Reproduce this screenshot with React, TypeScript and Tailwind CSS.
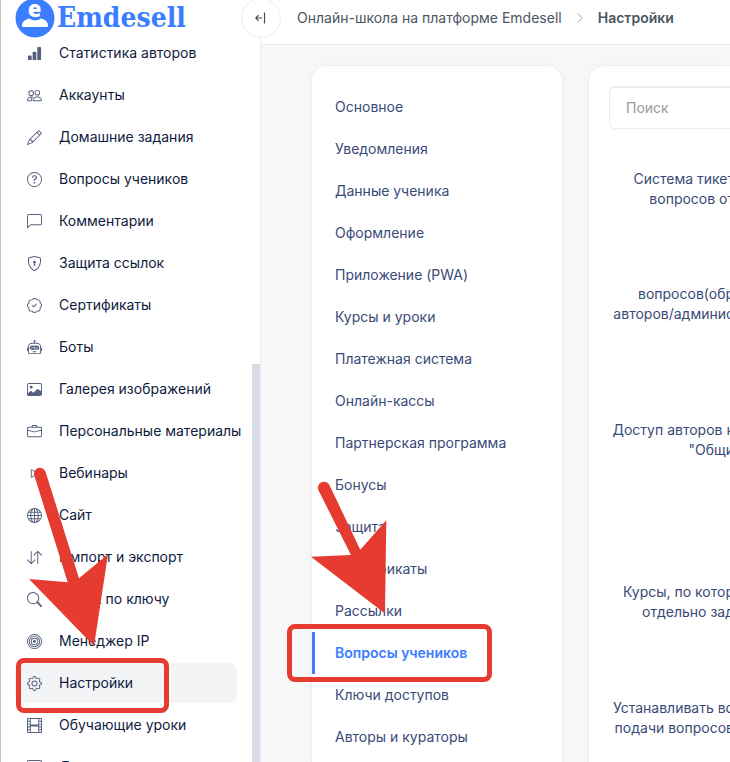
import { useState } from 'react';
import type { IconType } from 'react-icons';
import {
  BsArrowDownUp,
  BsBarChartFill,
  BsBriefcase,
  BsBullseye,
  BsChatLeft,
  BsChevronRight,
  BsCodeSquare,
  BsFilm,
  BsGear,
  BsGlobe,
  BsImage,
  BsPatchCheck,
  BsPencil,
  BsPeople,
  BsPlay,
  BsQuestionCircle,
  BsRobot,
  BsSearch,
  BsShieldLock,
} from 'react-icons/bs';

interface NavItem {
  label: string;
  icon: IconType;
}

const navItems: NavItem[] = [
  { label: 'Статистика авторов', icon: BsBarChartFill },
  { label: 'Аккаунты', icon: BsPeople },
  { label: 'Домашние задания', icon: BsPencil },
  { label: 'Вопросы учеников', icon: BsQuestionCircle },
  { label: 'Комментарии', icon: BsChatLeft },
  { label: 'Защита ссылок', icon: BsShieldLock },
  { label: 'Сертификаты', icon: BsPatchCheck },
  { label: 'Боты', icon: BsRobot },
  { label: 'Галерея изображений', icon: BsImage },
  { label: 'Персональные материалы', icon: BsBriefcase },
  { label: 'Вебинары', icon: BsPlay },
  { label: 'Сайт', icon: BsGlobe },
  { label: 'Импорт и экспорт', icon: BsArrowDownUp },
  { label: 'Поиск по ключу', icon: BsSearch },
  { label: 'Менеджер IP', icon: BsBullseye },
  { label: 'Настройки', icon: BsGear },
  { label: 'Обучающие уроки', icon: BsFilm },
  { label: 'Документы', icon: BsCodeSquare },
];

const sections = [
  'Основное',
  'Уведомления',
  'Данные ученика',
  'Оформление',
  'Приложение (PWA)',
  'Курсы и уроки',
  'Платежная система',
  'Онлайн-кассы',
  'Партнерская программа',
  'Бонусы',
  'Защита',
  'Сертификаты',
  'Рассылки',
  'Вопросы учеников',
  'Ключи доступов',
  'Авторы и кураторы',
];

const options = [
  { lines: ['Система тикет', 'вопросов от'], space: 'pb-[75px]' },
  { lines: ['вопросов(обр', 'авторов/админис'], space: 'pb-24' },
  { lines: ['Доступ авторов к', '"Общи'], space: 'pb-[122px]' },
  { lines: ['Курсы, по котор', 'отдельно зад'], space: 'pb-[76px]' },
  { lines: ['Устанавливать во', 'подачи вопросов'], space: 'pb-[76px]' },
];

function Logo() {
  return (
    <a href="#" className="flex items-center gap-0.5 text-[#3b7dff]">
      <svg className="h-10 w-10 shrink-0" viewBox="0 0 40 40" aria-hidden="true">
        <circle cx="20" cy="20" r="19.5" fill="currentColor" />
        <path
          d="M7 27.500C7 23 11.500 21.500 14.500 20.600C18 23.200 22.500 23.200 25.800 20.600C29 21.500 33 23 33 27.500C33 28.700 32.400 29 31.500 29H8.500C7.600 29 7 28.700 7 27.500Z"
          fill="#fff"
        />
        <text
          x="19.500"
          y="19"
          textAnchor="middle"
          fontFamily="Open Sans, sans-serif"
          fontWeight="800"
          fontSize="22"
          fill="#fff"
        >
          e
        </text>
      </svg>
      <span className="font-['DejaVu_Serif_Condensed','DejaVu_Serif',serif] text-[28px] leading-8 font-bold">
        Emdesell
      </span>
    </a>
  );
}

function Sidebar() {
  const [active, setActive] = useState('Настройки');

  return (
    <aside className="flex w-[261px] shrink-0 border-x border-l-[#c4c4c4] border-r-[#ebebf3] bg-white">
      <div className="min-w-0 flex-1">
        <div className="flex h-8 items-center pt-1 pl-[14px]">
          <Logo />
        </div>
        <nav className="flex flex-col gap-0.5 pt-px pr-[15px] pl-[14px]">
          {navItems.map(({ label, icon: Icon }) => (
            <a
              key={label}
              href="#"
              onClick={() => setActive(label)}
              className={`flex h-10 items-center gap-[17px] rounded-lg pl-3 whitespace-nowrap ${
                active === label ? 'bg-[#f3f4f6]' : ''
              }`}
            >
              <Icon className="h-[15px] w-[15px] shrink-0 text-[#55607e]" />
              <span className="text-sm text-[#0f1b3d]">{label}</span>
            </a>
          ))}
        </nav>
      </div>
      <div className="w-2 shrink-0 pt-[364px]">
        <div className="h-full bg-[#d6dce3]" />
      </div>
    </aside>
  );
}

function Header() {
  return (
    <header className="relative flex h-[45px] shrink-0 items-center border-b border-[#ebebf3] bg-white pb-2 pl-9 whitespace-nowrap text-[#4b5563]">
      <button
        type="button"
        aria-label="Свернуть меню"
        className="absolute -top-0.5 -left-5 flex h-10 w-10 items-center justify-center rounded-full border border-[#ebebf3] bg-white"
      >
        <svg className="h-3 w-3" viewBox="0 0 12 12" fill="none" stroke="#4a4a4a" strokeWidth="1.200" aria-hidden="true">
          <path d="M7 6H1M3.500 3.200L0.800 6L3.500 8.800M9.500 0.500V11.500" />
        </svg>
      </button>
      <nav className="flex items-center text-sm">
        <a href="#">Онлайн-школа на платформе Emdesell</a>
        <BsChevronRight className="mx-3 h-3 w-3 text-[#a5a8b0]" />
        <span className="font-semibold">Настройки</span>
      </nav>
    </header>
  );
}

function SectionMenu() {
  const [current, setCurrent] = useState('Вопросы учеников');

  return (
    <nav className="w-[252px] shrink-0 rounded-t-2xl border border-b-0 border-[#ededf4] bg-white pt-5 shadow-[0_0_20px_rgba(0,0,0,0.03)]">
      {sections.map((section) => (
        <a
          key={section}
          href="#"
          onClick={() => setCurrent(section)}
          className={`flex h-[42px] items-center border-l-3 pl-5 text-sm ${
            current === section
              ? 'border-[#3b7dff] font-semibold text-[#3b7dff]'
              : 'border-transparent text-[#3a4a78]'
          }`}
        >
          {section}
        </a>
      ))}
    </nav>
  );
}

function OptionsPanel() {
  return (
    <section className="min-w-0 flex-1 overflow-hidden rounded-tl-2xl border border-r-0 border-b-0 border-[#ededf4] bg-white pt-5 pl-5 shadow-[0_0_20px_rgba(0,0,0,0.03)]">
      <input
        type="text"
        aria-label="Поиск"
        placeholder="Поиск"
        className="block h-[43px] w-full rounded-l-md border border-t-2 border-r-0 border-[#ebebf3] px-4 pb-0.5 text-sm text-[#3a4a78] outline-none placeholder:text-[#9a9a9a]"
      />
      <div className="-mr-1 pt-10 text-right text-sm whitespace-nowrap text-[#3a4a78]">
        {options.map(({ lines, space }) => (
          <p key={lines[0]} className={space}>
            {lines[0]}
            <br />
            {lines[1]}
          </p>
        ))}
      </div>
    </section>
  );
}

// Red arrows and frames that point the reader to the right menu items
function Annotations() {
  return (
    <div className="pointer-events-none absolute inset-0 overflow-hidden">
      <svg className="absolute top-0 left-0 h-[762px] w-[730px]" viewBox="0 0 730 762" fill="#e53b30" aria-hidden="true">
        <path d="M34.300 475.500A5.800 5.800 0 0 1 45.600 472L79 578.300L108 554.300L94 646L29 579L67.700 582.300Z" />
        <path d="M318.600 490.500A6 6 0 0 1 329.400 485L360.300 549.700L386.300 520.300L385 613.500L311 556.700L351 555Z" />
      </svg>
      <div className="absolute top-[658px] left-4 h-[55px] w-[153px] rounded-lg border-5 border-[#e53b30]" />
      <div className="absolute top-[624px] left-[287px] h-[58px] w-[205px] rounded-lg border-5 border-[#e53b30]" />
    </div>
  );
}

export default function App() {
  return (
    <div className="relative flex h-screen overflow-hidden bg-[#f8f8f8] font-['Inter',sans-serif]">
      <Sidebar />
      <div className="flex min-w-0 flex-1 flex-col">
        <Header />
        <main className="flex min-h-0 flex-1 items-stretch gap-[25px] pt-5 pl-[50px]">
          <SectionMenu />
          <OptionsPanel />
        </main>
      </div>
      <Annotations />
    </div>
  );
}
